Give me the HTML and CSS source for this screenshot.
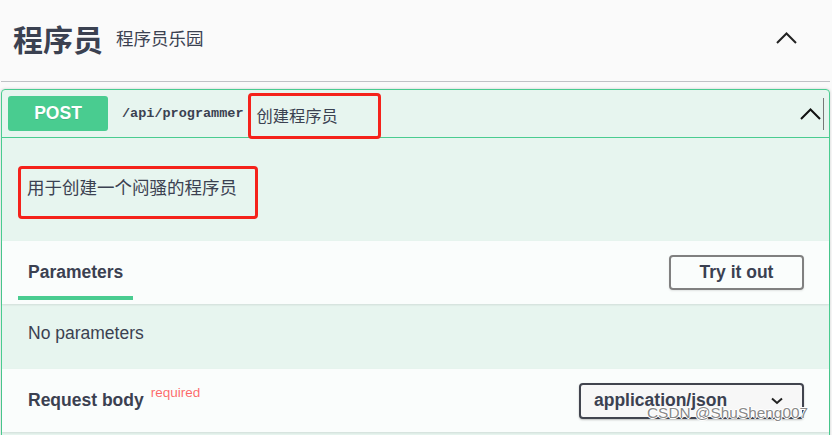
FILE: index.html
```html
<!DOCTYPE html>
<html lang="zh-CN">

<head>
    <meta charset="UTF-8">
    <meta name="viewport" content="width=device-width, initial-scale=1.0">
    <title>程序员 - API</title>
    <link rel="stylesheet" href="styles.css">
</head>

<body>
    <div class="wrapper">
        <div class="tag-header">
            <h3 class="tag-title">
                <span class="tag-name">程序员</span>
                <small class="tag-desc">程序员乐园</small>
            </h3>
            <svg class="expand" width="21" height="12" viewBox="0 0 21 12">
                <polyline points="1,11 10.5,1.5 20,11" fill="none" stroke="#222" stroke-width="2" />
            </svg>
        </div>

        <div class="opblock">
            <div class="summary">
                <span class="method">POST</span>
                <span class="path">/api/programmer</span>
                <span class="summary-desc mark">创建程序员</span>
                <svg class="arrow" width="21" height="12" viewBox="0 0 21 12">
                    <polyline points="1,11 10.5,1.5 20,11" fill="none" stroke="#111" stroke-width="2" />
                </svg>
                <span class="caret"></span>
            </div>

            <div class="description">
                <p class="mark">用于创建一个闷骚的程序员</p>
            </div>

            <div class="section-header">
                <div class="tab">Parameters</div>
                <button class="try-out">Try it out</button>
            </div>
            <div class="section-body">No parameters</div>

            <div class="section-header request">
                <h4 class="request-title">Request body<span class="required">required</span></h4>
                <div class="select">
                    <span>application/json</span>
                    <svg width="12" height="8" viewBox="0 0 12 8">
                        <polyline points="1,1.5 6,6 11,1.5" fill="none" stroke="#222" stroke-width="2" />
                    </svg>
                </div>
            </div>
            <div class="section-body request-body"></div>
        </div>
    </div>

    <div class="watermark">CSDN @ShuSheng007</div>
</body>

</html>
```

FILE: styles.css
```css
* {
    box-sizing: border-box;
}

body {
    margin: 0;
    background: #fafafa;
    font-family: "Liberation Sans", "Noto Sans CJK SC", sans-serif;
    color: #3b4151;
    overflow: hidden;
}

.wrapper {
    padding: 0 2px 0 1px;
}

.tag-header {
    display: flex;
    align-items: center;
    justify-content: space-between;
    height: 82px;
    padding: 0 33px 0 12px;
    margin-bottom: 7px;
    border-bottom: 1px solid rgba(59, 65, 81, 0.3);
}

.tag-title {
    display: flex;
    align-items: center;
    margin: 0;
}

.tag-name {
    font-size: 30px;
    font-weight: 700;
    line-height: 30px;
}

.tag-desc {
    margin: 0 0 3px 13px;
    font-size: 17.5px;
    font-weight: 400;
    line-height: 20px;
}

.expand {
    margin-bottom: 6px;
}

.opblock {
    border: 1px solid #49cc90;
    border-radius: 4px;
    background: rgba(73, 204, 144, 0.1);
    box-shadow: 0 0 3px rgba(0, 0, 0, 0.19);
}

.summary {
    display: flex;
    align-items: center;
    padding: 6px 5px 6px 6px;
    border-bottom: 1px solid #49cc90;
}

.method {
    width: 100px;
    height: 35px;
    line-height: 35px;
    border-radius: 3px;
    background: #49cc90;
    color: #fff;
    font-size: 17.5px;
    font-weight: 700;
    text-align: center;
    text-shadow: 0 1px 0 rgba(0, 0, 0, 0.1);
}

.path {
    margin-left: 14px;
    font-family: "Liberation Mono", monospace;
    font-size: 13.5px;
    font-weight: 700;
}

.mark {
    border: 3px solid #f5221b;
    border-radius: 4px;
}

.summary-desc {
    align-self: flex-start;
    display: flex;
    align-items: center;
    width: 133px;
    height: 46px;
    margin: -3px 0 -8px 4px;
    padding: 0 6px 3px;
    font-size: 16.25px;
}

.arrow {
    margin-left: auto;
}

.caret {
    width: 1px;
    height: 32px;
    margin-left: 2px;
    background: #777;
}

.description {
    padding: 28px 16px 22px;
}

.description p {
    width: 240px;
    height: 53px;
    margin: 0;
    padding: 7px 6px 0;
    font-size: 17.5px;
    line-height: 24px;
}

.section-header {
    display: flex;
    align-items: center;
    justify-content: space-between;
    height: 63px;
    padding: 0 25px 0 16px;
    background: rgba(255, 255, 255, 0.8);
    box-shadow: 0 1px 2px rgba(0, 0, 0, 0.1);
}

.tab {
    align-self: flex-start;
    padding: 21px 10px 0;
    font-size: 17.5px;
    font-weight: 700;
    line-height: 20px;
}

.tab::after {
    content: "";
    display: block;
    height: 4px;
    margin: 14px -10px 0;
    background: #49cc90;
}

.try-out {
    width: 135px;
    height: 35px;
    border: 2px solid #808080;
    border-radius: 4px;
    background: transparent;
    color: #3b4151;
    font: 700 17.5px "Liberation Sans", sans-serif;
    box-shadow: 0 1px 2px rgba(0, 0, 0, 0.1);
    cursor: pointer;
}

.section-body {
    height: 65px;
    padding: 19px 26px 0;
    font-size: 17.5px;
    line-height: 20px;
}

.request {
    padding-left: 26px;
}

.request-title {
    margin: 0;
    font-size: 17.5px;
    line-height: 20px;
}

.required {
    position: relative;
    top: -9px;
    margin-left: 7px;
    color: rgba(255, 0, 0, 0.6);
    font-size: 13.5px;
    font-weight: 400;
}

.request-body {
    height: 120px;
}

.select {
    display: flex;
    align-items: center;
    justify-content: space-between;
    width: 225px;
    height: 36px;
    padding: 0 19px 0 13px;
    border: 2px solid #41444e;
    border-radius: 4px;
    background: #f7f7f7;
    box-shadow: 0 1px 2px rgba(0, 0, 0, 0.25);
    font-size: 17.5px;
    font-weight: 700;
}

.watermark {
    position: absolute;
    left: 647px;
    top: 404px;
    font-size: 15.4px;
    line-height: 17px;
    color: rgba(105, 105, 105, 0.8);
    text-shadow: 1px 0 0 #fff, -1px 0 0 #fff, 0 1px 0 #fff, 0 -1px 0 #fff;
}
```
